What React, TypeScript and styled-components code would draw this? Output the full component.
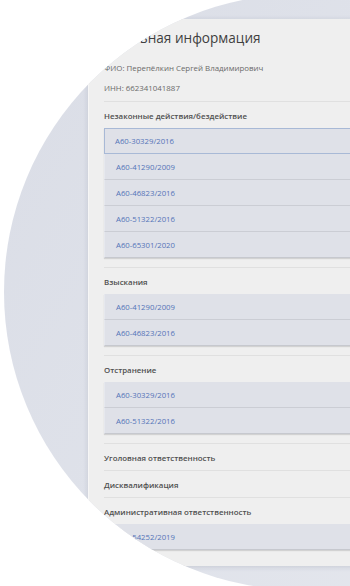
import styled, { createGlobalStyle, css } from "styled-components"

const GlobalStyle = createGlobalStyle`
  html, body {
    margin: 0;
    padding: 0;
    background: #ffffff;
  }
  body {
    font-family: "Open Sans", "Liberation Sans", sans-serif;
  }
`

interface Section {
  title: string
  cases: string[]
}

const sections: Section[] = [
  {
    title: "Незаконные действия/бездействие",
    cases: ["А60-30329/2016", "А60-41290/2009", "А60-46823/2016", "А60-51322/2016", "А60-65301/2020"],
  },
  { title: "Взыскания", cases: ["А60-41290/2009", "А60-46823/2016"] },
  { title: "Отстранение", cases: ["А60-30329/2016", "А60-51322/2016"] },
  { title: "Уголовная ответственность", cases: [] },
  { title: "Дисквалификация", cases: [] },
  { title: "Административная ответственность", cases: ["А60-54252/2019"] },
]

const App = () => {
  return (
    <>
      <GlobalStyle />
      <Viewport>
        <Circle>
          <Card>
            <Title>Основная информация</Title>
            <Meta>ФИО: Перепёлкин Сергей Владимирович</Meta>
            <Meta $gap={8}>ИНН: 662341041887</Meta>
            {sections.map((section) => (
              <SectionBlock key={section.title} $hasCases={section.cases.length > 0}>
                <SectionTitle>{section.title}</SectionTitle>
                {section.cases.length > 0 && (
                  <CaseList>
                    {section.cases.map((item, index) => (
                      <CaseItem key={item} $isActive={section.title.startsWith("Незаконные") && index === 0}>
                        {item}
                      </CaseItem>
                    ))}
                  </CaseList>
                )}
              </SectionBlock>
            ))}
          </Card>
        </Circle>
      </Viewport>
    </>
  )
}

const Viewport = styled.div`
  width: 350px;
  height: 586px;
  overflow: hidden;
  background: #ffffff;
`

const Circle = styled.div`
  width: 596px;
  height: 596px;
  margin: -6px 0 0 4px;
  border-radius: 50%;
  overflow: hidden;
  background: linear-gradient(120deg, #dadde6 0%, #dfe2ea 45%, #e6e8ee 100%);
`

const Card = styled.div`
  width: 320px;
  margin: 25px 0 0 84px;
  padding: 9px 0 7px 15px;
  background: #efefef;
  border-left: 1px solid #f6f6f6;
  box-shadow: 0 1px 5px rgba(60, 70, 90, 0.16);
`

const Title = styled.div`
  padding-left: 2px;
  font-size: 13.6px;
  line-height: 20px;
  color: #3f3f3f;
  white-space: nowrap;
`

const Meta = styled.div<{ $gap?: number }>`
  margin-top: ${(props) => `${props.$gap ?? 14}px`};
  font-size: 7.9px;
  line-height: 12px;
  color: #6a6a6a;
  white-space: nowrap;
`

const SectionBlock = styled.div<{ $hasCases: boolean }>`
  margin-top: 7px;
  border-top: 1px solid #e0e0e0;
  padding: 8px 0 ${(props) => (props.$hasCases ? "9px" : "6px")};
  & + & {
    margin-top: 0;
  }
`

const SectionTitle = styled.div`
  font-size: 7.9px;
  line-height: 12px;
  font-weight: 600;
  color: #505050;
  white-space: nowrap;
`

const CaseList = styled.div`
  margin-top: 6px;
  background: #dfe1e8;
  box-shadow: 0 1px 1px rgba(0, 0, 0, 0.12);
`

const CaseItem = styled.div<{ $isActive: boolean }>`
  height: 25px;
  padding-left: 11px;
  display: flex;
  align-items: center;
  font-size: 7.75px;
  color: #5474b8;
  border-bottom: 1px solid #cbcdd4;
  border-left: 1px solid #e6e8ee;
  &:last-child {
    border-bottom-color: #c6c8ce;
  }
  ${(props) =>
    props.$isActive &&
    css`
      height: 24px;
      border: 1px solid #a8b9d6;
      padding-left: 10px;
    `}
`

export default App
